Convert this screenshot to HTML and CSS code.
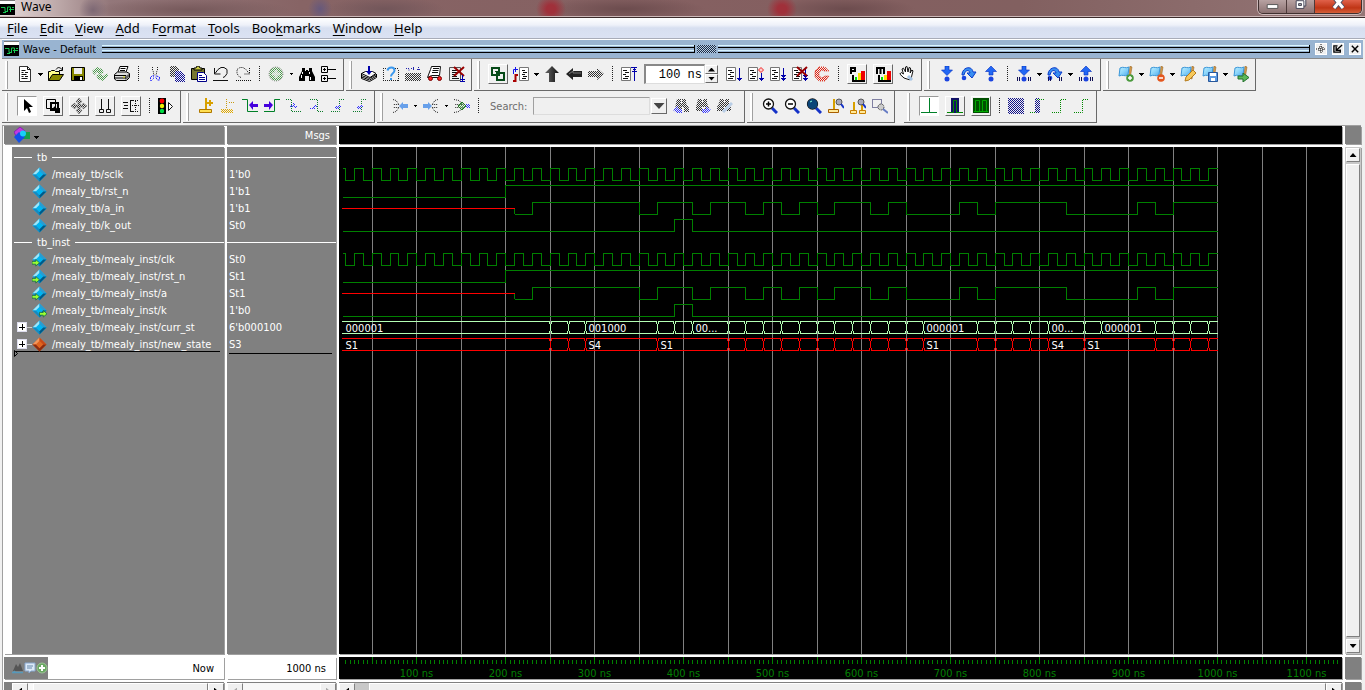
FILE: index.html
```html
<!DOCTYPE html>
<html lang="en">
<head>
<meta charset="utf-8">
<title>Wave</title>
<link rel="stylesheet" href="styles.css">
</head>
<body>
<svg class="defs" width="0" height="0" aria-hidden="true">
  <defs>
    <pattern id="dk" width="2" height="2" patternUnits="userSpaceOnUse"><path d="M0 0h1v1h-1zM1 1h1v1h-1z" fill="#333"/></pattern>
    <pattern id="db" width="2" height="2" patternUnits="userSpaceOnUse"><path d="M0 0h1v1h-1zM1 1h1v1h-1z" fill="#33f"/></pattern>
    <pattern id="dn" width="2" height="2" patternUnits="userSpaceOnUse"><path d="M0 0h1v1h-1zM1 1h1v1h-1z" fill="#118"/></pattern>
    <pattern id="dg" width="2" height="2" patternUnits="userSpaceOnUse"><path d="M0 0h1v1h-1zM1 1h1v1h-1z" fill="#4a9a4a"/></pattern>
    <pattern id="dr" width="2" height="2" patternUnits="userSpaceOnUse"><path d="M0 0h1v1h-1zM1 1h1v1h-1z" fill="#e02010"/></pattern>
    <pattern id="dy" width="2" height="2" patternUnits="userSpaceOnUse"><path d="M0 0h1v1h-1zM1 1h1v1h-1z" fill="#e0a800"/></pattern>
    <linearGradient id="arrowDark" x2="1" y2="0"><stop offset="0" stop-color="#666"/><stop offset="1" stop-color="#111"/></linearGradient>
    <linearGradient id="flagBlue" x2="1" y2="1"><stop offset="0" stop-color="#bff0ff"/><stop offset=".5" stop-color="#8ad4fa"/><stop offset="1" stop-color="#4aa6ec"/></linearGradient>
  </defs>
  <symbol id="wave" viewBox="0 0 15 15"><path fill="#fff" d="M0 0h15v15H0z"/><path fill="#777" d="M0 0h15v1H0z"/><path d="M0 4h15v11H0z"/><path d="M1 7.500h4v4h3M7.500 11v-4h3v5M3 12.500h3M9 9.500h5M12 7.500h2" stroke="#16c850" fill="none"/></symbol>
  <symbol id="new" viewBox="0 0 16 16"><path d="M2.500.5h8l3 3v12h-11z" fill="#fff" stroke="#333"/><path d="M10.500.5v3h3M4.500 4.500h4M4.500 6.500h2M8 6.500h3M4.500 8.500h5M4.500 10.500h2M8 10.500h3M4.500 12.500h6" stroke="#111" fill="none"/></symbol>
  <symbol id="open" viewBox="0 0 16 16"><path d="M.5 14.500v-9h2l1-1h3l1 1h4v3" fill="#ff8" stroke="#000"/><path d="M.5 14.500l4-6h11l-4 6z" fill="#8a8a00" stroke="#000"/><path d="M8 3.500c2-3 4-2 6 0M14.500 1v3.500h-3.500" stroke="#000" fill="none"/></symbol>
  <symbol id="save" viewBox="0 0 16 16"><path d="M1.500 1.500h13v13h-13z" fill="#888800" stroke="#000"/><path d="M4 2h8v6H4z" fill="#eee"/><path d="M4 10h9v4H4z"/><path d="M10 11h2v3h-2z" fill="#fff"/></symbol>
  <symbol id="refresh" viewBox="0 0 16 16"><path d="M0 5l5-4 5 2 2 4-5 1-2-2-3 3zM16 10l-5 5-5-2-2-4 5-1 2 2 4-3z" fill="url(#dg)"/></symbol>
  <symbol id="print" viewBox="0 0 16 16"><path d="M4 6l2-5.500h8l-2 5.500" fill="#fff" stroke="#000"/><path d="M6.500 2.500h5M6 4.500h5" stroke="#000"/><path d="M.5 8.500l3-2.500h9l3 1.500v4l-3 3h-10l-2-1.500z" fill="#ddd" stroke="#000"/><path d="M1 9.500h11v4M1 12h11" stroke="#000" fill="none"/><path d="M9 11h2" stroke="#dd0"/><path d="M13 9l2-1v3l-2 2z" fill="#666"/></symbol>
  <symbol id="cut" viewBox="0 0 16 16"><path d="M5.500 1v3l1 2v2l1 1M10.500 1v3l-1 2v2l-2 2" stroke="#222" fill="none" stroke-dasharray="1 1"/><path d="M3.500 11.500l2-2h1v3l-2 2h-1zM9.500 10l3 1v3h-2l-2-3z" stroke="#22f" fill="none" stroke-dasharray="2 1"/></symbol>
  <symbol id="copy" viewBox="0 0 16 16"><path d="M1 0h6l3 3v8H1z" fill="url(#dk)"/><path d="M6 5h6l4 4v7H6z" fill="#eef"/><path d="M6 5h6l4 4v7H6z" fill="url(#dn)"/></symbol>
  <symbol id="paste" viewBox="0 0 16 16"><path d="M.5 2.500h13v11H.5z" fill="#777730" stroke="#000"/><path d="M3 4V2h2l1-2h2l1 2h2v2z" fill="#cc4" stroke="#000"/><path d="M6.500 6.500h6l3 3v6h-9z" fill="#fff" stroke="#008"/><path d="M8 9.500h3M8 11.500h6M8 13.500h6" stroke="#008"/></symbol>
  <symbol id="undo" viewBox="0 0 16 16"><path d="M1.500 2v6h6M2 7.500l3-4 3-2h3l3 2v4l-2 3-2 1" stroke="#111" fill="none"/><path d="M0 14.500h15" stroke="#111"/></symbol>
  <symbol id="redo" viewBox="0 0 16 16"><path d="M14.500 2v6h-6M14 7.500l-3-4-3-2h-3l-3 2v4l2 3 2 1M1 14.500h15" stroke="#111" fill="none" stroke-dasharray="1 1"/></symbol>
  <symbol id="addc" viewBox="0 0 16 16"><circle cx="8" cy="8" r="7" fill="url(#dg)" stroke="#999" stroke-dasharray="1 1"/><path d="M6.500 4h3v2.500H12v3H9.500V12h-3V9.500H4v-3h2.500z" fill="#f0f0f0" opacity=".7"/></symbol>
  <symbol id="find" viewBox="0 0 16 16"><path d="M3 2h3v3h1V4h2v1h1V2h3v3l3 6v4h-6v-5H6v5H0v-4l3-6z"/><path d="M3.500 6v2M2.500 9v3M10.500 6v2M11.500 11v3" stroke="#fff"/></symbol>
  <symbol id="tree" viewBox="0 0 16 16"><path d="M.5.5h6v6h-6zM.5 9.500h6v6h-6zM7 3.500h8M7 12.500h8M2 3.500h3M3.500 2v3M2 12.500h3M3.500 11v3" stroke="#000" fill="none"/></symbol>
  <symbol id="compile" viewBox="0 0 16 16"><path d="M.5 7.500l4-2h7l3.500 2-6 4zM.5 7.500v5l8 3 7-4V8M.5 9.500l8 3 7-4M.5 11l8 3 7-4" stroke="#000" fill="#fff"/><path d="M7 0h2v5h2L8 9 5 5h2z" fill="#00a"/></symbol>
  <symbol id="askd" viewBox="0 0 16 16"><path d="M0 2.500h4M12 2.500h4M.5 4v11M15.500 4v11M0 14.500h16" stroke="#222" fill="none" stroke-dasharray="1 1"/><path d="M4.500 4.500c1-4 7-4 7 0 0 3-3.500 2.500-3.500 6M8 12v2" stroke="#3a98ee" stroke-width="2" fill="none"/></symbol>
  <symbol id="chipd" viewBox="0 0 16 16"><path d="M0 7h16v8H0z" fill="url(#dk)"/><path d="M1 2.500h3v3M6 2.500h4M8.500 1v4M13.500 1v4M12 3.500h3" stroke="#22a" fill="none" stroke-dasharray="1 1"/></symbol>
  <symbol id="simcar" viewBox="0 0 16 16"><path d="M4.500.5h9l-1 9h-8l-4 2 3-8z" fill="#fff" stroke="#111"/><path d="M6 2.500h6M5.500 4.500h6M5 6.500h6" stroke="#111"/><path d="M1 11.500h13" stroke="#111"/><circle cx="3.500" cy="12.500" r="2" fill="#f22" stroke="#700"/><circle cx="12.500" cy="12.500" r="2" fill="#f22" stroke="#700"/></symbol>
  <symbol id="stopsim" viewBox="0 0 16 16"><path d="M.5 1.500h11v13H.5z" fill="#eee" stroke="#555"/><path d="M3 4.500h5M3 6.500h7M3 8.500h4M3 10.500h5M3 12.500h7" stroke="#111"/><path d="M5 1l10 9M15 1L5 10" stroke="#900" stroke-width="2"/><path d="M13.500 9v6M11 13.500h5M11 15.500h5" stroke="#00a"/></symbol>
  <symbol id="link" viewBox="0 0 16 16"><path d="M2 2h7v7H2zM7 7h7v7H7z" fill="none" stroke="#064a18" stroke-width="2"/><path d="M5 5.500h4M9.500 5v5" stroke="#064a18"/></symbol>
  <symbol id="restart" viewBox="0 0 16 16"><path d="M6.500 1.500h9v13h-9z" fill="#fff" stroke="#777"/><path d="M9 4.500h3M10 6.500h4M9 8.500h3M10 10.500h4M9 12.500h4" stroke="#111"/><path d="M0 15h2.500V9H5" stroke="#a00" stroke-width="2" fill="none"/><path d="M.5 8V3.500H5M2.500 1v5" stroke="#11e" fill="none"/></symbol>
  <symbol id="up" viewBox="0 0 16 16"><path d="M8 0l7 7h-4v9H5V7H1z" fill="url(#arrowDark)"/></symbol>
  <symbol id="left" viewBox="0 0 16 16"><path d="M0 8l7-6v3h9v6H7v3z" fill="#222"/><path d="M3 8l4-3v2h8" stroke="#777" fill="none"/></symbol>
  <symbol id="rightd" viewBox="0 0 16 16"><path d="M16 8L9 2v3H0v6h9v3z" fill="url(#dk)"/></symbol>
  <symbol id="doc" viewBox="0 0 16 16"><path d="M.5 1.500h9v13H.5z" fill="#fff" stroke="#777"/><path d="M2 4.500h4M4 6.500h4M2 8.500h3M4 10.500h4M2 12.500h5" stroke="#111"/></symbol>
  <symbol id="toup" viewBox="0 0 16 16"><use href="#doc"/><path d="M10 1.500h6M13.500 2v13M11 5.500h5M12 3.500h3" stroke="#00a"/></symbol>
  <symbol id="run" viewBox="0 0 16 16"><use href="#doc"/><path d="M13.500 2v13M11 12.500h5M12 13.500h3" stroke="#00a"/></symbol>
  <symbol id="runr" viewBox="0 0 16 16"><use href="#doc"/><path d="M13.500 7v8M11 12.500h5M12 13.500h3" stroke="#00a"/><path d="M10.500 4L13 1.500 15.500 4 13 6.500z" stroke="#e22" fill="#fcc"/></symbol>
  <symbol id="runall" viewBox="0 0 16 16"><use href="#run"/><path d="M11 9.500h5M12 10.500h3" stroke="#00a"/></symbol>
  <symbol id="brk" viewBox="0 0 16 16"><use href="#runall"/><path d="M5 1l10 9M15 1L5 10" stroke="#900" stroke-width="2"/></symbol>
  <symbol id="stopd" viewBox="0 0 16 16"><path d="M5 1h6l4 4h-5L8 4 5 6v4l3 2 3-2h4l-4 5H5l-4-4V5z" fill="url(#dr)" stroke="#d43" stroke-dasharray="1 1"/></symbol>
  <symbol id="pbar" viewBox="0 0 16 16"><path d="M2 1v7M1 2h5v3H2" stroke="#000" stroke-width="2" fill="none"/><path d="M4 9v6h12" stroke="#000" stroke-width="2" fill="none"/><path d="M6 11h2v3H6z" fill="#0d0"/><path d="M9 7h3v7H9z" fill="#fd0"/><path d="M12 5h4v9h-4z" fill="#e00"/></symbol>
  <symbol id="mbar" viewBox="0 0 16 16"><path d="M2 8V2h7v6M5.500 2v6" stroke="#000" stroke-width="2" fill="none"/><path d="M4 9v6h12" stroke="#000" stroke-width="2" fill="none"/><path d="M6 11h2v3H6z" fill="#0d0"/><path d="M9 9h3v5H9z" fill="#fd0"/><path d="M12 5h4v9h-4z" fill="#e00"/></symbol>
  <symbol id="hand" viewBox="0 0 16 16"><path d="M5 12L.8 8l1.500-1.500L4.500 8 3 3l1.500-.8L6.500 6V1l1.500-.5L9 6l1-4.500 1.500.5-.3 5 1.500-3 1.300.8-1.500 6-2 3z" fill="#fff" stroke="#111"/><path d="M9 10l4 4" stroke="#a6c4e4" stroke-width="3"/></symbol>
  <symbol id="stepin" viewBox="0 0 16 16"><path d="M6 0h4v4h3.500L8 9.500 2.500 4H6z" fill="#2268f4" stroke="#012bc0" stroke-width=".6"/><circle cx="8" cy="13" r="2.500" fill="#1b44e0"/></symbol>
  <symbol id="stepover" viewBox="0 0 16 16"><path d="M1 9C1 1 11-1 12 6h3l-4 6-5-5h3C8 3 4 4 3 9z" fill="#398ef0" stroke="#0839cc"/><circle cx="3" cy="12" r="2.300" fill="#1b44e0"/></symbol>
  <symbol id="stepout" viewBox="0 0 16 16"><path d="M6 9h4V5.500h3.500L8 0 2.500 5.500H6z" fill="#2268f4" stroke="#012bc0" stroke-width=".6"/><circle cx="8" cy="13" r="2.500" fill="#1b44e0"/></symbol>
  <symbol id="bars" viewBox="0 0 16 16"><path d="M1.500 11v4M3.500 11v4M12.500 11v4M14.500 11v4" stroke="#115"/></symbol>
  <symbol id="flag" viewBox="0 0 16 16"><path d="M12 0l2 1-2 12-1.500-.5z" fill="#d59a4a" stroke="#8a5a1a" stroke-width=".5"/><path d="M2 2c4-2 5 1 9-1l-1 8c-4 2-5-1-9 1z" fill="url(#flagBlue)" stroke="#3a96d8"/></symbol>
  <symbol id="fadd" viewBox="0 0 16 16"><use href="#flag"/><circle cx="12" cy="12" r="3.800" fill="#4b9a3e"/><path d="M12 10v4M10 12h4" stroke="#fff" stroke-width="1.500"/></symbol>
  <symbol id="fdel" viewBox="0 0 16 16"><use href="#flag"/><circle cx="12" cy="12" r="3.800" fill="#e4561d"/><path d="M10 12h4" stroke="#fff" stroke-width="1.500"/></symbol>
  <symbol id="fedit" viewBox="0 0 16 16"><use href="#flag"/><path d="M5 15l1-4 7-7 3 3-7 7z" fill="#f6c95c" stroke="#b67b1c"/></symbol>
  <symbol id="fsave" viewBox="0 0 16 16"><use href="#flag"/><path d="M6.500 6.500h9v9h-9z" fill="#5c9ae0" stroke="#27569a"/><path d="M8 7h6v3H8zM9 12h4v3H9z" fill="#fff"/></symbol>
  <symbol id="fgo" viewBox="0 0 16 16"><use href="#flag"/><path d="M5 10h5V7l6 4.500-6 4.500v-3H5z" fill="#5cb85a" stroke="#23712c"/></symbol>
  <symbol id="ptr" viewBox="0 0 16 16"><path d="M5 1v12l3-3 2 5 2-1-2-5h4z"/></symbol>
  <symbol id="zoomsel" viewBox="0 0 16 16"><path d="M1.500 1.500h9v9h-9z" stroke="#000" fill="none"/><path d="M6 5h7v7H6z" stroke="#000" stroke-width="2" fill="none"/><path d="M9 9l5 5M14 10v4h-4" stroke="#000" stroke-width="2" fill="none"/></symbol>
  <symbol id="move" viewBox="0 0 16 16"><path d="M8 0l3 4H9v3h3V5l4 3-4 3V9H9v3h2l-3 4-3-4h2V9H4v2L0 8l4-3v2h3V4H5z" fill="url(#dk)" stroke="#555" stroke-width=".5"/></symbol>
  <symbol id="twoc" viewBox="0 0 16 16"><path d="M4.500 1v10M11.500 1v10M2.500 11.500h4v3h-4zM9.500 11.500h4v3h-4z" stroke="#111" fill="none"/></symbol>
  <symbol id="expd" viewBox="0 0 16 16"><path d="M0 4.500h5M1 7.500h4M0 10.500h5M7 2.500h4M7.500 2v11M7 13.500h4" stroke="#111" fill="none"/><path d="M12 2.500h4M12.500 3v11M9 7.500h7M12 13.500h4" stroke="#111" stroke-dasharray="1 1"/></symbol>
  <symbol id="traffic" viewBox="0 0 16 16"><path d="M0 0h8v16H0z"/><circle cx="4" cy="3" r="2.400" fill="#f00"/><circle cx="4" cy="8" r="2.200" fill="#ee0"/><circle cx="4" cy="13" r="2.200" fill="#0d4"/><path d="M10.500 4.500l4 4-4 4z" fill="#fff" stroke="#111"/></symbol>
  <symbol id="curadd" viewBox="0 0 16 16"><path d="M8 0v11M9 5h6M12 2v6" stroke="#d8a000" stroke-width="2"/><path d="M1.500 11.500h12v3h-12z" fill="#ffdf52" stroke="#b07800"/></symbol>
  <symbol id="curdel" viewBox="0 0 16 16"><path d="M6.500 1v10M9 4.500h5" stroke="#c89a10" stroke-dasharray="1 1"/><path d="M1 11h12v4H1z" fill="url(#dy)"/></symbol>
  <symbol id="eprev" viewBox="0 0 16 16"><path d="M0 1.500h5.500v12H16" stroke="#008028" fill="none"/><path d="M7 7l4-4v3h5v3h-5v3z" fill="#4400dd"/></symbol>
  <symbol id="enext" viewBox="0 0 16 16"><path d="M0 13.500h10.500v-12H16" stroke="#008028" fill="none"/><path d="M9 7L5 3v3H0v3h5v3z" fill="#4400dd"/></symbol>
  <symbol id="dfall" viewBox="0 0 16 16"><path d="M0 1.500h5.500v12H16" stroke="#0a7a2a" fill="none" stroke-dasharray="1 1"/><path d="M4 7h3V5h2v3h2v2H8V9H4z" fill="url(#db)"/></symbol>
  <symbol id="dfall2" viewBox="0 0 16 16"><path d="M2 1.500h7.500v12H16" stroke="#0a7a2a" fill="none" stroke-dasharray="1 1"/><path d="M2 10h3V8h2V7h2v2H7v2H2z" fill="url(#db)"/></symbol>
  <symbol id="drise" viewBox="0 0 16 16"><path d="M1 13.500h8.500v-12H15" stroke="#0a7a2a" fill="none" stroke-dasharray="1 1"/><path d="M5 8h3V7h3v2H9v2H5z" fill="url(#db)"/></symbol>
  <symbol id="br1" viewBox="0 0 16 16"><path d="M1 1.500l3 1 3 4H1M1 14.500l3-1 3-4H1" stroke="#222" fill="none" stroke-dasharray="1 1"/><path d="M7 8l4-4v2h5v4h-5v2z" fill="#3a86e8" opacity=".75"/></symbol>
  <symbol id="br2" viewBox="0 0 16 16"><path d="M15 1.500l-3 1-3 4h6M15 14.500l-3-1-3-4h6" stroke="#222" fill="none" stroke-dasharray="1 1"/><path d="M9 8L5 4v2H0v4h5v2z" fill="#3a86e8" opacity=".75"/></symbol>
  <symbol id="br3" viewBox="0 0 16 16"><path d="M0 1.500l5 1 4 4H1M0 14.500l5-1 4-4H1" stroke="#222" fill="none" stroke-dasharray="1 1"/><path d="M4 8l4-4 4 4-4 4z" fill="url(#dg)" stroke="#272"/><path d="M12 6h4v4h-4z" fill="url(#db)"/></symbol>
  <symbol id="findd" viewBox="0 0 16 16"><path d="M4 1h4v4h1V1h4v4l3 5v4h-5V9H9v5H4l-2-3 1-6z" fill="url(#dk)"/><path d="M0 12l5-4v3h4v4H4z" fill="url(#db)"/></symbol>
  <symbol id="finddr" viewBox="0 0 16 16"><path d="M3 1h4v4h1V1h4v4l2 5v3h-4V9H7v4H1V9l1-4z" fill="url(#dk)"/><path d="M16 12l-5-4v3H7v4h5z" fill="url(#db)"/></symbol>
  <symbol id="findo" viewBox="0 0 16 16"><path d="M3 1h4v4h1V1h4v4l2 5v3h-4V9H7v4H0V9l2-4z" fill="url(#dk)"/><path d="M6 14l9-9" stroke="#b9cee6" stroke-width="3"/></symbol>
  <symbol id="lens" viewBox="0 0 16 16"><path d="M10 10l5 5" stroke="#1432c8" stroke-width="3"/><circle cx="6.500" cy="6" r="5" fill="#fff" stroke="#111" stroke-width="1.300"/></symbol>
  <symbol id="zin" viewBox="0 0 16 16"><use href="#lens"/><path d="M4 6h5M6.500 3.500v5" stroke="#000" stroke-width="1.500"/></symbol>
  <symbol id="zout" viewBox="0 0 16 16"><use href="#lens"/><path d="M4 6h5" stroke="#000" stroke-width="1.500"/></symbol>
  <symbol id="zfull" viewBox="0 0 16 16"><use href="#lens"/><circle cx="6.500" cy="6" r="5" fill="#0a4478"/><path d="M4 4l2-1" stroke="#8fd"/></symbol>
  <symbol id="zcur" viewBox="0 0 16 16"><path d="M6 1v10" stroke="#d8a000" stroke-width="2"/><path d="M.5 11.500h10v3H.5z" fill="#ffe99a" stroke="#a85e00"/><circle cx="11" cy="4" r="3" fill="#aab" stroke="#555"/><path d="M13 6l3 4" stroke="#1432c8" stroke-width="2"/></symbol>
  <symbol id="zcur2" viewBox="0 0 16 16"><path d="M4 4v8M12 6v6" stroke="#d8a000" stroke-width="2"/><path d="M.5 12.500h6v3h-6zM9.500 12.500h6v3h-6z" fill="#ffe99a" stroke="#c88000"/><circle cx="11" cy="4" r="3" fill="#aab" stroke="#555"/><path d="M13 6l3 4" stroke="#1432c8" stroke-width="2"/></symbol>
  <symbol id="zarea" viewBox="0 0 16 16"><path d="M.5 1.500h9v8h-9z" stroke="#115" fill="none" stroke-dasharray="1 1"/><circle cx="9" cy="9" r="3" fill="#ccc" stroke="#555" stroke-dasharray="2 1"/><path d="M11 11l5 4" stroke="#667bc4" stroke-width="2"/></symbol>
  <symbol id="w1" viewBox="0 0 16 16"><path d="M8.500 0v14M0 14.500h16" stroke="#008028"/></symbol>
  <symbol id="w2" viewBox="0 0 16 16"><path d="M4 0h8v15H4z" fill="#116"/><path d="M0 14.500h6.500v-12h3v12H16" stroke="#080" fill="none"/></symbol>
  <symbol id="w3" viewBox="0 0 16 16"><path d="M0 0h16v15H0z" fill="#005000"/><path d="M2.500 14V2.500h4V14M9.500 14V2.500h4V14M1 13.500h14" stroke="#0a0" fill="none"/></symbol>
  <symbol id="w4" viewBox="0 0 16 16"><path d="M0 0h16v16H0z" fill="url(#dn)"/></symbol>
  <symbol id="w5" viewBox="0 0 16 16"><path d="M5 0h5v15H5z" fill="url(#dn)"/><path d="M0 14.500h5M7 1.500h8" stroke="#080" stroke-dasharray="1 1"/></symbol>
  <symbol id="w6" viewBox="0 0 16 16"><path d="M0 14.500h8.500v-13H15" stroke="#080" fill="none" stroke-dasharray="1 1"/></symbol>
  <symbol id="sig" viewBox="0 0 16 16"><path d="M8 .5L15.500 8 8 15.500.5 8z" fill="#00b4f0"/><path d="M8 .5L.5 8H4l4-4z" fill="#9fe6fa"/><path d="M8 .5L15.500 8H12L8 4z" fill="#2a9bd0"/><path d="M8 15.500L.5 8H4l4 4z" fill="#1689c0"/><path d="M8 15.500L15.500 8H12l-4 4z" fill="#005a88"/></symbol>
  <symbol id="sigo" viewBox="0 0 16 16"><path d="M8 .5L15.500 8 8 15.500.5 8z" fill="#e06420"/><path d="M8 .5L.5 8H4l4-4z" fill="#f4975c"/><path d="M8 .5L15.500 8H12L8 4z" fill="#c84a18"/><path d="M8 15.500L15.500 8H12l-4 4zM8 15.500L.5 8H4l4 4z" fill="#8c2c10"/></symbol>
  <symbol id="sigin" viewBox="0 0 16 16"><use href="#sig"/><path d="M0 10h4V8l4 3.500L4 15v-2H0z" fill="#9f3" stroke="#164" stroke-width=".8"/></symbol>
  <symbol id="sigout" viewBox="0 0 16 16"><use href="#sig"/><path d="M8 10h4V8l4 3.500-4 3.500v-2H8z" fill="#9f3" stroke="#164" stroke-width=".8"/></symbol>
  <symbol id="objs" viewBox="0 0 16 16"><path d="M0 5l6-5 5 4v5H2z" fill="#c23ae0" stroke="#70a" stroke-width=".6"/><path d="M9 5h7v7H9z" fill="#18a048"/><path d="M0 10l5-5 6 5-6 6z" fill="#1450e8"/><circle cx="9" cy="6.500" r="3" fill="#18d0f8"/></symbol>
</svg>

<div class="app">
  <header class="title">
    <svg class="logo"><use href="#wave"/></svg><span class="title-text">Wave</span>
    <div class="winbtns">
      <button class="wb" aria-label="Minimize"><svg viewBox="0 0 28 13"><path d="M8.500 4.500h11v4h-11z" fill="#fff" stroke="#555"/></svg></button>
      <button class="wb" aria-label="Restore"><svg viewBox="0 0 28 13"><path d="M11.500-1h8v7h-8z" fill="#fff" stroke="#445"/><path d="M9.500.5h8v8h-8z" fill="#fff" stroke="#445"/><path d="M12 3.500h3v2h-3z" fill="#aaa" stroke="#445"/></svg></button>
      <button class="wb close" aria-label="Close"><svg viewBox="0 0 46 13"><path d="M19-3l9 11M28-3l-9 11" stroke="#545064" stroke-width="5"/><path d="M19-3l9 11M28-3l-9 11" stroke="#fff" stroke-width="3"/></svg></button>
    </div>
  </header>
  <nav class="menu">
    <button><u>F</u>ile</button><button><u>E</u>dit</button><button><u>V</u>iew</button><button><u>A</u>dd</button><button>F<u>o</u>rmat</button><button><u>T</u>ools</button><button>Boo<u>k</u>marks</button><button><u>W</u>indow</button><button><u>H</u>elp</button>
  </nav>
  <div class="dock">
    <svg class="logo"><use href="#wave"/></svg><span class="dock-text">Wave - Default</span>
    <i class="lines"></i><i class="dots"></i><i class="lines"></i>
    <button class="db" aria-label="Move"><svg viewBox="0 0 10 10"><path d="M5 0v10M0 5h10M3 3h4v4H3z" stroke="#111" fill="none" stroke-dasharray="1 1"/></svg></button>
    <button class="db" aria-label="Undock"><svg viewBox="0 0 11 11"><path d="M5 2H1v7h7V6M10 1L4 6.500M3.500 3v4h4" stroke="#000" stroke-width="1.500" fill="none"/></svg></button>
    <button class="db" aria-label="Close panel"><svg viewBox="0 0 11 11"><path d="M2 2l7 7M9 2L2 9" stroke="#000" stroke-width="1.600"/></svg></button>
  </div>

  <div class="bars">
    <div class="barrow">
      <div class="group">
        <button class="b" aria-label="New"><svg><use href="#new"/></svg></button><i class="dd"></i>
        <button class="b" aria-label="Open"><svg><use href="#open"/></svg></button>
        <button class="b" aria-label="Save"><svg><use href="#save"/></svg></button>
        <button class="b" aria-label="Reload"><svg><use href="#refresh"/></svg></button>
        <button class="b" aria-label="Print"><svg><use href="#print"/></svg></button><i class="sep"></i>
        <button class="b" aria-label="Cut"><svg><use href="#cut"/></svg></button>
        <button class="b" aria-label="Copy"><svg><use href="#copy"/></svg></button>
        <button class="b" aria-label="Paste"><svg><use href="#paste"/></svg></button>
        <button class="b" aria-label="Undo"><svg><use href="#undo"/></svg></button>
        <button class="b" aria-label="Redo"><svg><use href="#redo"/></svg></button><i class="sep"></i>
        <button class="b" aria-label="Add"><svg><use href="#addc"/></svg></button><i class="dd off"></i>
        <button class="b" aria-label="Find"><svg><use href="#find"/></svg></button>
        <button class="b" aria-label="Collapse"><svg><use href="#tree"/></svg></button>
      </div>
      <div class="group">
        <button class="b" aria-label="Compile"><svg><use href="#compile"/></svg></button>
        <button class="b" aria-label="Compile out of date"><svg><use href="#askd"/></svg></button>
        <button class="b" aria-label="Compile all"><svg><use href="#chipd"/></svg></button>
        <button class="b" aria-label="Simulate"><svg><use href="#simcar"/></svg></button>
        <button class="b" aria-label="End simulation"><svg><use href="#stopsim"/></svg></button>
      </div>
      <div class="group">
        <button class="b raised snug" aria-label="Environment"><svg><use href="#link"/></svg></button>
        <button class="b" aria-label="Restart"><svg><use href="#restart"/></svg></button><i class="dd"></i>
        <button class="b" aria-label="Up"><svg><use href="#up"/></svg></button>
        <button class="b" aria-label="Back"><svg><use href="#left"/></svg></button>
        <button class="b" aria-label="Forward"><svg><use href="#rightd"/></svg></button><i class="sep"></i>
        <button class="b" aria-label="Reset"><svg><use href="#toup"/></svg></button>
        <input class="runlen" value="100 ns" aria-label="Run length">
        <span class="spin"><button aria-label="Increase"><i class="tri up"></i></button><button aria-label="Decrease"><i class="tri"></i></button></span>
        <button class="b" aria-label="Run"><svg><use href="#run"/></svg></button>
        <button class="b" aria-label="Continue run"><svg><use href="#runr"/></svg></button>
        <button class="b" aria-label="Run all"><svg><use href="#runall"/></svg></button>
        <button class="b" aria-label="Break"><svg><use href="#brk"/></svg></button>
        <button class="b" aria-label="Stop"><svg><use href="#stopd"/></svg></button><i class="sep"></i>
        <button class="b raised" aria-label="Performance"><svg><use href="#pbar"/></svg></button>
        <button class="b raised" aria-label="Memory"><svg><use href="#mbar"/></svg></button>
        <button class="b" aria-label="Edit hand"><svg><use href="#hand"/></svg></button>
      </div>
      <div class="group">
        <button class="b" aria-label="Step into"><svg><use href="#stepin"/></svg></button>
        <button class="b" aria-label="Step over"><svg><use href="#stepover"/></svg></button>
        <button class="b" aria-label="Step out"><svg><use href="#stepout"/></svg></button><i class="sep"></i>
        <button class="b" aria-label="Step into current"><svg><use href="#stepin"/><use href="#bars"/></svg></button><i class="dd"></i>
        <button class="b" aria-label="Step over current"><svg><use href="#stepover"/><use href="#bars"/></svg></button><i class="dd"></i>
        <button class="b" aria-label="Step out current"><svg><use href="#stepout"/><use href="#bars"/></svg></button>
      </div>
      <div class="group">
        <button class="b" aria-label="Add bookmark"><svg><use href="#fadd"/></svg></button><i class="dd"></i>
        <button class="b" aria-label="Delete bookmark"><svg><use href="#fdel"/></svg></button><i class="dd"></i>
        <button class="b" aria-label="Edit bookmark"><svg><use href="#fedit"/></svg></button>
        <button class="b" aria-label="Save bookmarks"><svg><use href="#fsave"/></svg></button><i class="dd"></i>
        <button class="b" aria-label="Go to bookmark"><svg><use href="#fgo"/></svg></button>
      </div>
    </div>
    <div class="barrow">
      <div class="group">
        <button class="b raised pressed" aria-label="Select"><svg><use href="#ptr"/></svg></button>
        <button class="b raised" aria-label="Zoom mode"><svg><use href="#zoomsel"/></svg></button>
        <button class="b raised" aria-label="Pan mode"><svg><use href="#move"/></svg></button>
        <button class="b raised" aria-label="Two cursor mode"><svg><use href="#twoc"/></svg></button>
        <button class="b raised" aria-label="Edit mode"><svg><use href="#expd"/></svg></button><i class="sep"></i>
        <button class="b" aria-label="Stop drawing"><svg><use href="#traffic"/></svg></button>
      </div>
      <div class="group">
        <button class="b" aria-label="Insert cursor"><svg><use href="#curadd"/></svg></button>
        <button class="b" aria-label="Delete cursor"><svg><use href="#curdel"/></svg></button>
        <button class="b" aria-label="Previous transition"><svg><use href="#eprev"/></svg></button>
        <button class="b" aria-label="Next transition"><svg><use href="#enext"/></svg></button>
        <button class="b" aria-label="Previous falling"><svg><use href="#dfall"/></svg></button>
        <button class="b" aria-label="Next falling"><svg><use href="#dfall2"/></svg></button>
        <button class="b" aria-label="Previous rising"><svg><use href="#drise"/></svg></button>
        <button class="b" aria-label="Next rising"><svg><use href="#drise"/></svg></button>
      </div>
      <div class="group roomy">
        <button class="b" aria-label="Drivers"><svg><use href="#br1"/></svg></button><i class="dd off"></i>
        <button class="b" aria-label="Readers"><svg><use href="#br2"/></svg></button><i class="dd off"></i>
        <button class="b" aria-label="Event"><svg><use href="#br3"/></svg></button><i class="sep"></i>
        <label class="slabel" for="q">Search:</label><input id="q" class="search" disabled><button class="drop" aria-label="Search history"><i class="tri big"></i></button>
        <button class="b" aria-label="Search back"><svg><use href="#findd"/></svg></button>
        <button class="b" aria-label="Search forward"><svg><use href="#finddr"/></svg></button>
        <button class="b" aria-label="Search options"><svg><use href="#findo"/></svg></button>
      </div>
      <div class="group">
        <button class="b" aria-label="Zoom in"><svg><use href="#zin"/></svg></button>
        <button class="b" aria-label="Zoom out"><svg><use href="#zout"/></svg></button>
        <button class="b" aria-label="Zoom full"><svg><use href="#zfull"/></svg></button>
        <button class="b" aria-label="Zoom cursor"><svg><use href="#zcur"/></svg></button>
        <button class="b" aria-label="Zoom between cursors"><svg><use href="#zcur2"/></svg></button>
        <button class="b" aria-label="Zoom area"><svg><use href="#zarea"/></svg></button>
      </div>
      <div class="group far">
        <button class="b raised pressed" aria-label="Expand off"><svg><use href="#w1"/></svg></button>
        <button class="b raised" aria-label="Expand deltas"><svg><use href="#w2"/></svg></button>
        <button class="b raised" aria-label="Expand events"><svg><use href="#w3"/></svg></button><i class="sep"></i>
        <button class="b" aria-label="Expand all"><svg><use href="#w4"/></svg></button>
        <button class="b" aria-label="Expand cursor"><svg><use href="#w5"/></svg></button>
        <button class="b" aria-label="Collapse all"><svg><use href="#w6"/></svg></button>
        <button class="b" aria-label="Collapse cursor"><svg><use href="#w6"/></svg></button>
      </div>
    </div>
  </div>

  <main class="panes">
    <div class="cell head"><svg class="objs"><use href="#objs"/></svg><i class="dd"></i></div>
    <div class="cell head msgs">Msgs</div>
    <div class="cell black"></div>
    <div class="cell"></div>

    <div class="cell names">
      <ul>
        <li class="divider">tb</li>
        <li><svg><use href="#sig"/></svg>/mealy_tb/sclk</li>
        <li><svg><use href="#sig"/></svg>/mealy_tb/rst_n</li>
        <li><svg><use href="#sig"/></svg>/mealy_tb/a_in</li>
        <li><svg><use href="#sig"/></svg>/mealy_tb/k_out</li>
        <li class="divider">tb_inst</li>
        <li><svg><use href="#sigin"/></svg>/mealy_tb/mealy_inst/clk</li>
        <li><svg><use href="#sigin"/></svg>/mealy_tb/mealy_inst/rst_n</li>
        <li><svg><use href="#sigin"/></svg>/mealy_tb/mealy_inst/a</li>
        <li><svg><use href="#sigout"/></svg>/mealy_tb/mealy_inst/k</li>
        <li class="bus"><button class="plus" aria-label="Expand curr_st"></button><svg><use href="#sig"/></svg>/mealy_tb/mealy_inst/curr_st</li>
        <li class="bus"><button class="plus" aria-label="Expand new_state"></button><svg><use href="#sigo"/></svg>/mealy_tb/mealy_inst/new_state</li>
      </ul>
      <div class="endline"><svg viewBox="0 0 4 7"><path d="M.5.5l3 3-3 3z" fill="#808080" stroke="#000"/></svg></div>
    </div>
    <div class="cell values">
      <ul>
        <li class="divider"></li>
        <li>1'b0</li><li>1'b1</li><li>1'b1</li><li>St0</li>
        <li class="divider"></li>
        <li>St0</li><li>St1</li><li>St1</li><li>1'b0</li><li>6'b000100</li><li>S3</li>
      </ul>
      <div class="endline"></div>
    </div>
    <div class="cell black"><svg id="plot" class="plot" role="img" aria-label="Waveforms"></svg></div>
    <div class="cell vscroll"><button aria-label="Scroll up"><i class="tri up"></i></button><div class="thumb"></div><button aria-label="Scroll down"><i class="tri"></i></button></div>

    <div class="cell foot"><div class="tools">
      <svg viewBox="0 0 12 12"><path d="M1 9l3-7 2 3 2-4 3 8z" fill="#555"/><path d="M0 10.500h11M3 9l-2 2" stroke="#59b" stroke-width="1.500"/></svg>
      <svg viewBox="0 0 12 12"><path d="M1 1h10v8H7l-2 2V9H1z" fill="#dce9f8" stroke="#88a8d0"/><path d="M3 4h6M3 6h5" stroke="#68a"/></svg>
      <svg viewBox="0 0 12 12"><circle cx="6" cy="6" r="5" fill="#6aa863" stroke="#9dc796"/><path d="M6 3v6M3 6h6" stroke="#fff" stroke-width="2"/></svg>
    </div><span>Now</span></div>
    <div class="cell foot"><span>1000 ns</span></div>
    <div class="cell black"><svg id="ruler" class="plot" role="img" aria-label="Time axis"></svg></div>
    <div class="cell"></div>

    <div class="cell hs inset"><button aria-label="Scroll names left"><i class="tri l"></i></button><div class="track"><div class="thumb"></div></div><button aria-label="Scroll names right"><i class="tri r"></i></button></div>
    <div class="cell hs dim"><button aria-label="Scroll values left"><i class="tri l"></i></button><div class="track"></div><button aria-label="Scroll values right"><i class="tri r"></i></button></div>
    <div class="cell hs wide"><button aria-label="Scroll waves left"><i class="tri l"></i></button><div class="track"><div class="thumb"></div></div><button aria-label="Scroll waves right"><i class="tri r"></i></button></div>
    <div class="cell"></div>
  </main>
</div>
<script src="wave.js"></script>
</body>
</html>
```
FILE: styles.css
```css
* { box-sizing: border-box; }
body {
  margin: 0;
  height: 100vh;
  overflow: hidden;
  background: #f0f0f0;
  font: 11px/17px "DejaVu Sans Condensed", "Noto Sans", sans-serif;
  color: #000;
}
button { font: inherit; color: inherit; padding: 0; border: 0; background: none; display: block; }
ul { list-style: none; margin: 0; padding: 0; }
i { display: block; }
.defs { position: absolute; }
.app { height: calc(100vh + 9px); display: flex; flex-direction: column; }

.title {
  display: flex;
  flex: none;
  height: 18px;
  border-bottom: 1px solid #3c2c2c;
  box-shadow: inset 0 -1px #cdb9b9;
  background:
    radial-gradient(14px 14px at 93px 10px, #7d6874, transparent),
    radial-gradient(100px 12px at 190px 10px, #76595b, transparent),
    radial-gradient(12px 13px at 320px 9px, #66587c, transparent),
    radial-gradient(60px 12px at 385px 9px, #72565a, transparent),
    radial-gradient(15px 14px at 551px 9px, #a0303a 30%, transparent),
    radial-gradient(80px 12px at 625px 9px, #6c4c4e, transparent),
    radial-gradient(15px 14px at 782px 9px, #a0303a 30%, transparent),
    radial-gradient(70px 12px at 845px 9px, #6c4c4e, transparent),
    linear-gradient(90deg, #e8dede 0, #c3b0b0 50px, #93777a 110px, #876465 300px, #845f60 800px, #826060 1020px, #947676);
}
.logo { width: 15px; height: 15px; flex: none; }
.title-text { font: 12px/14px "Noto Sans", sans-serif; margin-left: 6px; }
.winbtns {
  display: flex;
  margin: 0 3px 0 auto;
  height: 14px;
  border: 1px solid #40302f;
  border-top: 0;
  border-radius: 0 0 5px 5px;
  overflow: hidden;
  box-shadow: 0 0 0 1px #cbb8b8;
}
.wb { width: 28px; height: 13px; background: linear-gradient(#b7a2a2, #8c7272); border-right: 1px solid #4d3a3a; }
.wb svg { display: block; width: 100%; height: 13px; }
.close { width: 46px; border: 0; background: linear-gradient(#e0614a, #c03516 60%, #d5603a); }

.menu {
  flex: none;
  display: flex;
  gap: 12px;
  height: 21px;
  padding-left: 7px;
  border-bottom: 1px solid #a8acb8;
  background: linear-gradient(#fff, #eef1f9 35%, #d7dff0 50%, #dbe2f3);
  font: 13px/20px "Noto Sans", sans-serif;
}
.menu u { text-underline-offset: 2px; }

.dock {
  flex: none;
  display: flex;
  align-items: center;
  height: 20px;
  border-top: 1px solid #fff;
  border-bottom: 1px solid #8a8a8a;
  margin: 0 2px;
  padding: 0 2px;
  background: #99b4d1;
}
.dock .logo { margin-bottom: 1px; }
.dock-text { margin: 0 6px 0 4px; }
.lines { flex: 1; height: 8px; border: solid #000; border-width: 0 1px 1px 0; background: linear-gradient(#d8f4ff 0 1px, #99b4d1 1px 2px, #000 2px 3px, #99b4d1 3px 5px, #d8f4ff 5px 6px, #99b4d1 6px); }
.dots { width: 19px; height: 8px; margin: 0 2px; background: repeating-conic-gradient(#1c2c44 0 25%, #b9cfe6 0 50%) 0 0 / 2px 2px; }
.db { width: 12px; height: 12px; margin-left: 5px; background: #f0f0f0; border: 1px solid #fff; }
.db svg { display: block; width: 10px; height: 10px; }

.bars { flex: none; padding-left: 2px; }
.barrow { display: flex; gap: 2px; height: 32px; }
.group {
  display: flex;
  align-items: center;
  padding: 0 3px 1px 12px;
  border: solid #696969;
  border-width: 0 1px 1px 0;
  background: linear-gradient(#a0a0a0, #a0a0a0) 5px 50% / 1px 28px no-repeat, linear-gradient(#fff, #fff) 3px 50% / 2px 28px no-repeat, #f0f0f0;
}
.roomy { padding-right: 8px; }
.far { margin-left: 7px; }
.b { width: 22px; height: 24px; display: grid; place-items: center; }
.b svg { width: 16px; height: 16px; display: block; }
.raised { width: 20px; height: 20px; margin: 0 3px; border: 1px solid; border-color: #fff #696969 #696969 #fff; background: #f0f0f0; }
.snug { margin: 0 2px; }
.pressed { background: #fff; border-color: #999 #fff #fff #999; }
.dd { width: 9px; height: 4px; margin-top: 2px; background: conic-gradient(#000 0 0) 2px 0 / 5px 1px no-repeat, conic-gradient(#000 0 0) 3px 1px / 3px 1px no-repeat, conic-gradient(#000 0 0) 4px 2px / 1px 1px no-repeat; }
.off { background: conic-gradient(#000 0 0) 3px 0 / 3px 1px no-repeat, conic-gradient(#000 0 0) 4px 1px / 1px 1px no-repeat; }
.sep { width: 11px; height: 16px; background: repeating-linear-gradient(#222 0 1px, transparent 1px 2px) 5px 0 / 1px 16px no-repeat; }
.runlen { width: 61px; height: 20px; margin-left: 4px; border: solid; border-width: 2px 1px 1px 2px; border-color: #888 #ddd #ddd #888; background: #fff; text-align: right; font: 12px "Liberation Mono", monospace; padding: 0 2px; }
.spin { display: flex; flex-direction: column; margin: 0 5px 0 0; }
.spin button, .drop { border: 1px solid; border-color: #fff #696969 #696969 #fff; display: grid; place-items: center; }
.spin button { width: 13px; height: 9px; }
.tri { width: 7px; height: 4px; background: #000; clip-path: polygon(0 0, 100% 0, 50% 100%); }
.tri.up { clip-path: polygon(50% 0, 100% 100%, 0 100%); }
.tri.l { width: 4px; height: 7px; clip-path: polygon(100% 0, 100% 100%, 0 50%); }
.tri.r { width: 4px; height: 7px; clip-path: polygon(0 0, 100% 50%, 0 100%); }
.tri.big { width: 11px; height: 6px; background: #444; }
.slabel { width: 43px; margin-left: 6px; color: #6d6d6d; }
.search { width: 117px; height: 18px; border: 1px solid; border-color: #a0a0a0 #ddd #ddd #a0a0a0; background: #f0f0f0; }
.drop { width: 16px; height: 16px; margin: 0 3px 0 1px; }

.panes {
  flex: 1;
  min-height: 0;
  display: grid;
  grid-template-columns: 220px 109px minmax(0, 1fr) 16px;
  grid-template-rows: 18px minmax(0, 1fr) 22px 17px;
  gap: 3px;
  margin: 2px 4px 0 2px;
  padding-left: 1px;
  border-top: 1px solid #a0a0a0;
  border-left: 1px solid #a0a0a0;
  background: #fff;
}
.cell { background: #808080; box-shadow: 1px 1px #a0a0a0; color: #fff; overflow: hidden; min-width: 0; min-height: 0; }
.head { display: flex; align-items: center; }
.head .dd { margin-top: 6px; }
.objs { width: 16px; height: 16px; margin: 0 2px 0 10px; }
.msgs { justify-content: flex-end; padding-right: 6px; }
.black { background: #000; }
.plot { display: block; width: 100%; height: 100%; font: 11px "DejaVu Sans Condensed", "Noto Sans", sans-serif; }
.names { border-left: 8px solid #fff; }
.names ul, .values ul { padding-top: 1px; }
.names li, .values li { display: flex; align-items: center; height: 17px; white-space: pre; padding-top: 1px; }
.names li svg { width: 15px; height: 15px; margin-right: 5px; flex: none; }
.names li { padding-left: 20px; }
.names .bus { padding-left: 5px; background: conic-gradient(#ccc 0 0) 15px 9px / 5px 1px no-repeat; }
.names .divider { padding-left: 2px; gap: 5px; }
.divider::before, .divider::after { content: ""; height: 1px; background: #fff; }
.divider::before { width: 18px; }
.divider::after { flex: 1; }
.values .divider::before { width: 0; }
.values li { padding-left: 2px; }
.values .divider { padding-left: 0; }
.plus { width: 10px; height: 10px; margin-right: 5px; border: 1px solid #dde; background: conic-gradient(#000 0 0) 50% 50% / 6px 1px no-repeat, conic-gradient(#000 0 0) 50% 50% / 1px 6px no-repeat, #fff; }
.endline { border-bottom: 1px solid #000; height: 2px; margin: 0 4px 0 2px; }
.endline svg { display: block; width: 4px; height: 7px; margin-top: -2px; }
.vscroll { display: flex; flex-direction: column; gap: 2px; padding: 1px; background: #c8c8c8; }
.vscroll button, .hs button { display: grid; place-items: center; border: 1px solid; border-color: #fff #808080 #808080 #fff; background: #f0f0f0; }
.vscroll button { height: 14px; }
.thumb { background: #f0f0f0; border: 1px solid; border-color: #fff #808080 #808080 #fff; }
.vscroll .thumb { flex: 1; }
.foot { display: flex; align-items: center; background: #fff; color: #000; justify-content: flex-end; padding-right: 10px; }
.tools { display: flex; align-self: stretch; align-items: center; background: #808080; width: 44px; padding-left: 8px; margin-right: auto; }
.tools svg { width: 12px; height: 12px; }
.hs { display: flex; border-top: 1px solid #808080; background: #f8f8f8; }
.hs button { width: 16px; color: #000; flex: none; }
.inset { border-left: 8px solid #808080; }
.dim .tri { background: #aaa; }
.track { flex: 1; padding-left: 5px; }
.wide .track { background: #c8c8c8; padding-left: 14px; }
.track .thumb { height: 100%; }
```
FILE: wave.js
```js
const NS = "http://www.w3.org/2000/svg";
const SCALE = 0.88975;
const ORIGIN = -11.2;
const START = 3;
const END = 1000;
const px = t => Math.max(START, Math.floor(t * SCALE + ORIGIN)) + 0.5;

function add(parent, tag, attrs, text) {
  const el = document.createElementNS(NS, tag);
  for (const k in attrs) el.setAttribute(k, attrs[k]);
  if (text) el.textContent = text;
  parent.appendChild(el);
  return el;
}
function line(svg, d, stroke) {
  add(svg, "path", { d, stroke, fill: "none", "shape-rendering": "crispEdges" });
}

/* changes: [time, level] pairs; y is the row's high level, low is 12px below */
function digital(svg, y, changes) {
  let d = "";
  changes.forEach(([t, v], i) => {
    const yy = y + (v ? 0 : 12) + 0.5;
    const next = i + 1 < changes.length ? changes[i + 1][0] : END;
    d += (i ? "V" + yy : "M" + px(t) + " " + yy) + "H" + px(next);
  });
  line(svg, d, "#008000");
}

/* two rails, with a notched crossing at every value change */
function bus(svg, y, color, times, labels) {
  const top = y + 0.5, bot = y + 12.5;
  let d = "";
  times.forEach((t, i) => {
    const last = i + 1 === times.length;
    const a = i ? px(t) + 0.5 : START;
    const b = last ? px(END) : px(times[i + 1]) - 0.5;
    d += `M${a} ${top}H${b}M${a} ${bot}H${b}`;
    if (i) {
      const x = px(t);
      d += `M${x} ${y + 3}V${y + 10}`;
      for (const s of [x - 1, x + 1]) d += `M${s} ${y}v3M${s} ${y + 10}v3`;
    }
    if (labels[t] !== undefined) add(svg, "text", { x: px(t) + 3, y: y + 11, fill: "#fff" }, labels[t]);
  });
  line(svg, d, color);
}

const run = (a, b) => Array.from({ length: (b - a) / 20 + 1 }, (_, i) => a + i * 20);
const clock = [[10, 1]];
for (let t = 20; t < END; t += 10) clock.push([t, (t / 10) % 2]);
const reset = [[0, 0], [200, 1]];
const input = [210, 230, 350, 370, 410, 430, 470, 490, 510, 530, 550, 570, 610, 630, 650, 710, 730, 750, 830, 910, 930, 950]
  .map((t, i) => [t, i % 2]);
const output = [[0, 0], [390, 1], [410, 0]];

const plot = document.getElementById("plot");
const ruler = document.getElementById("ruler");

function draw() {
  plot.replaceChildren();
  ruler.replaceChildren();
  const width = plot.clientWidth;
  const height = plot.clientHeight;

  for (let t = 50; px(t) < width; t += 50) line(plot, `M${px(t)} 0V${height}`, "#808080");

  for (const base of [21, 106]) {
    digital(plot, base, clock);
    digital(plot, base + 17, reset);
    digital(plot, base + 34, input);
    line(plot, `M${START} ${base + 40.5}H${px(210)}`, "#ff0000");
    line(plot, `M${px(210)} ${base + 41}v5`, "#008000");
    digital(plot, base + 51, output);
  }

  bus(plot, 174, "#b4ffb4",
    [0, 250, 270, 290, 370, 390, 410, ...run(450, 670), ...run(730, 810), 850, 870, ...run(930, 990)],
    { 0: "000001", 290: "001000", 410: "00...", 670: "000001", 810: "00...", 870: "000001" });
  bus(plot, 191, "#ff0000",
    [0, 250, 270, 290, 370, ...run(450, 670), ...run(730, 810), 850, ...run(930, 990)],
    { 0: "S1", 290: "S4", 370: "S1", 670: "S1", 810: "S4", 850: "S1" });

  for (let t = 20; px(t) < width - 4; t += 5) {
    line(ruler, `M${px(t)} ${t % 50 ? 3 : 0}V7`, "#008000");
    if (t % 100 === 0 && px(t) < width - 24)
      add(ruler, "text", { x: px(t), y: 20, fill: "#008000", "text-anchor": "middle" }, t + " ns");
  }
}

draw();
addEventListener("resize", draw);
```
